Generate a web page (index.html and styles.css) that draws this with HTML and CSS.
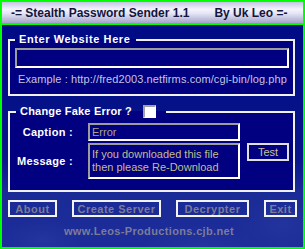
FILE: index.html
```html
<!DOCTYPE html>
<html>
<head>
<meta charset="utf-8">
<link rel="stylesheet" href="styles.css">
</head>
<body>
<div class="window">
  <div class="titlebar">
    <span class="title-left">-= Stealth Password Sender 1.1</span>
    <span class="title-right">By Uk Leo =-</span>
  </div>
  <div class="content">
    <fieldset class="frame frame-site">
      <legend class="frame-title site-legend">Enter Website Here</legend>
      <div class="sunken site-input"></div>
      <div class="example">Example : http://fred2003.netfirms.com/cgi-bin/log.php</div>
    </fieldset>
    <fieldset class="frame frame-error">
      <legend class="frame-title error-legend"><span>Change Fake Error ?</span><span class="checkbox"></span></legend>
      <div class="error-grid">
        <div class="label">Caption :</div>
        <div class="sunken field caption-field">Error</div>
        <div></div>
        <div class="label">Message :</div>
        <div class="sunken field message-field">If you downloaded this file<br>then please Re-Download</div>
        <div class="btn test-btn">Test</div>
      </div>
    </fieldset>
    <div class="buttons">
      <div class="btn bottom-btn about">About</div>
      <div class="btn bottom-btn create">Create Server</div>
      <div class="btn bottom-btn decrypt">Decrypter</div>
      <div class="btn bottom-btn exit">Exit</div>
    </div>
    <div class="url">www.Leos-Productions.cjb.net</div>
  </div>
</div>
</body>
</html>
```

FILE: styles.css
```css
html, body {
  margin: 0;
  padding: 0;
  background: #000080;
}
.window {
  width: 305px;
  height: 249px;
  box-sizing: border-box;
  border: 2px solid #00ff00;
  display: flex;
  flex-direction: column;
  overflow: hidden;
  font-family: "Liberation Sans", Arial, sans-serif;
}
.titlebar {
  height: 21px;
  border-bottom: 2px solid #00ff00;
  background: linear-gradient(#c4c4e4 0%, #f4f4ff 35%, #e4e4f4 55%, #a4a4cc 100%);
  display: flex;
  align-items: center;
  padding-left: 9px;
  font-size: 12px;
  font-weight: bold;
  color: #14143c;
  white-space: nowrap;
}
.title-right {
  margin-left: 25px;
}
.content {
  flex: 1;
  padding: 8px 0 0 6px;
  background:
    radial-gradient(ellipse 40px 20px at 40px 215px, rgba(60,80,180,0.25), transparent),
    radial-gradient(ellipse 60px 25px at 200px 225px, rgba(60,80,180,0.25), transparent),
    radial-gradient(ellipse 50px 30px at 280px 200px, rgba(50,70,170,0.3), transparent),
    linear-gradient(#000a84 0%, #08168a 60%, #1a2a96 75%, #1c2c98 100%);
}
.frame {
  margin: 0;
  width: 287px;
  box-sizing: border-box;
  border: 2px solid #f0f0f0;
  background: #000080;
  padding: 0;
  min-width: 0;
}
.frame-title {
  color: #ffffff;
  font-weight: bold;
  font-size: 11px;
  line-height: 13px;
  margin-left: 0;
}
.site-legend {
  padding: 0 6px 0 4px;
  letter-spacing: 0.6px;
}
.frame-site {
  padding: 2px 4px 8px 5px;
}
.sunken {
  box-sizing: border-box;
  border-style: solid;
  border-width: 2px;
  border-color: #9c9c9c #ffffff #ffffff #9c9c9c;
  background: #000080;
}
.site-input {
  height: 20px;
}
.example {
  margin-top: 5px;
  font-size: 11px;
  line-height: 13px;
  color: #c4c4e0;
  padding-left: 3px;
  letter-spacing: 0.1px;
  white-space: nowrap;
}
.frame-error {
  margin-top: 9px;
  padding: 5px 4px 11px 6px;
}
.error-legend {
  display: flex;
  align-items: center;
  gap: 11px;
  padding: 0 10px 0 4px;
  letter-spacing: 0.2px;
}
.checkbox {
  width: 13px;
  height: 13px;
  box-sizing: border-box;
  border-style: solid;
  border-width: 2px 1px 1px 2px;
  border-color: #a0a0a0 #ffffff #ffffff #a0a0a0;
  background: #ffffff;
}
.error-grid {
  display: grid;
  grid-template-columns: 57px 152px 42px;
  grid-template-rows: 18px 36px;
  column-gap: 15px;
  row-gap: 2px;
}
.error-grid .test-btn {
  margin-left: -8px;
}
.label {
  color: #ffffff;
  font-weight: bold;
  font-size: 11px;
  letter-spacing: 0.3px;
  display: flex;
  align-items: center;
  justify-content: flex-end;
}
.field {
  font-size: 11px;
  line-height: 13px;
  padding: 1px 2px;
  white-space: nowrap;
  overflow: hidden;
}
.caption-field {
  color: #a8a48c;
}
.message-field {
  color: #c4bc8c;
  padding-top: 3px;
}
.btn {
  box-sizing: border-box;
  border: 2px solid #f4f4f4;
  display: flex;
  align-items: center;
  justify-content: center;
  font-size: 11px;
}
.test-btn {
  height: 18px;
  color: #c8c098;
  border-color: #e0e0e0;
  width: 42px;
}
.buttons {
  display: flex;
  gap: 15px;
  margin-top: 8px;
}
.bottom-btn {
  height: 17px;
  color: #7c7c98;
  font-weight: bold;
  letter-spacing: 0.5px;
  white-space: nowrap;
}
.about { width: 49px; }
.create { width: 89px; }
.decrypt { width: 73px; }
.exit { width: 33px; }
.url {
  margin-top: 8px;
  text-align: center;
  padding-right: 13px;
  font-size: 11px;
  line-height: 13px;
  font-weight: bold;
  letter-spacing: 0.35px;
  color: #7c7c98;
}
```
